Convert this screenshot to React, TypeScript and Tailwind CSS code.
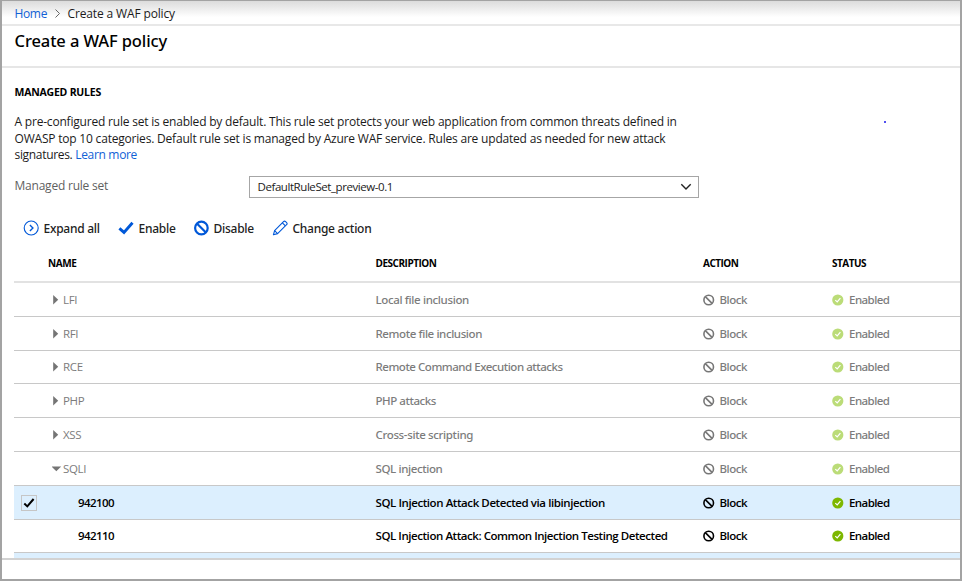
import type { ReactNode } from 'react';

const BLUE = '#0058d8';

function ExpandIcon() {
  return (
    <svg width="16" height="16" viewBox="0 0 16 16" fill="none" stroke={BLUE}>
      <circle cx="8.2" cy="8" r="7" strokeWidth="1.1" />
      <path d="M6.9 5.1 9.9 8l-3 2.9" strokeWidth="1.4" />
    </svg>
  );
}

function EnableIcon() {
  return (
    <svg width="16" height="16" viewBox="0 0 16 16" fill="none" stroke={BLUE} strokeWidth="2.9">
      <path d="M1.4 8.3 6 12.4 14.5 2.8" />
    </svg>
  );
}

function DisableIcon() {
  return (
    <svg width="16" height="16" viewBox="0 0 16 16" fill="none" stroke={BLUE} strokeWidth="2.2">
      <circle cx="8.4" cy="8" r="6.3" />
      <path d="m3.9 3.5 9 9" />
    </svg>
  );
}

function PencilIcon() {
  return (
    <svg width="16" height="16" viewBox="0 0 16 16" fill="none" stroke={BLUE} strokeWidth="1.1" strokeLinejoin="round">
      <path d="m1.4 14.8 1.2-4.2L11.5 1.6a1.5 1.5 0 0 1 2.1 0l1 1a1.5 1.5 0 0 1 0 2.1L5.6 13.6z" />
      <path d="m2.6 10.6 3 3M10.4 2.8l3 3" />
    </svg>
  );
}

function BlockIcon({ color }: { color: string }) {
  return (
    <svg width="12" height="12" viewBox="0 0 12 12" fill="none" stroke={color} strokeWidth="1.6">
      <circle cx="5.7" cy="6" r="4.8" />
      <path d="m2.3 2.6 6.8 6.8" />
    </svg>
  );
}

function EnabledIcon({ color }: { color: string }) {
  return (
    <svg width="12" height="12" viewBox="0 0 12 12" fill="none">
      <circle cx="5.8" cy="6" r="5.6" fill={color} />
      <path d="m3.3 6.1 1.9 1.8 3.2-3.8" stroke="#fff" strokeWidth="1.2" />
    </svg>
  );
}

function Tool({ icon, label, className }: { icon: ReactNode; label: string; className: string }) {
  return (
    <div className={`flex items-center gap-1 ${className}`}>
      {icon}
      <span className="pt-[2px] pl-[0.5px]">{label}</span>
    </div>
  );
}

type Row = {
  name: string;
  description: string;
  height: string;
  spacing: string;
  kind: 'closed' | 'open' | 'rule';
  checked?: boolean;
};

const rows: Row[] = [
  { name: 'LFI', description: 'Local file inclusion', height: 'h-[34px]', spacing: 'tracking-[-0.36px]', kind: 'closed' },
  { name: 'RFI', description: 'Remote file inclusion', height: 'h-[34px]', spacing: 'tracking-[-0.4px]', kind: 'closed' },
  { name: 'RCE', description: 'Remote Command Execution attacks', height: 'h-[33px]', spacing: 'tracking-[-0.47px]', kind: 'closed' },
  { name: 'PHP', description: 'PHP attacks', height: 'h-[34px]', spacing: 'tracking-[-0.44px]', kind: 'closed' },
  { name: 'XSS', description: 'Cross-site scripting', height: 'h-[34px]', spacing: 'tracking-[-0.36px]', kind: 'closed' },
  { name: 'SQLI', description: 'SQL injection', height: 'h-[34px]', spacing: 'tracking-[-0.38px]', kind: 'open' },
  { name: '942100', description: 'SQL Injection Attack Detected via libinjection', height: 'h-[34px]', spacing: 'tracking-[-0.42px]', kind: 'rule', checked: true },
  { name: '942110', description: 'SQL Injection Attack: Common Injection Testing Detected', height: 'h-[33px]', spacing: 'tracking-[-0.44px]', kind: 'rule' },
];

const columns = 'grid grid-cols-[361.5px_327.5px_129px_1fr]';

function RuleRow({ row }: { row: Row }) {
  const rule = row.kind === 'rule';
  const tone = rule
    ? "font-['Open_Sans',sans-serif] font-semibold text-black"
    : "font-['Noto_Sans',sans-serif] font-medium text-[#7c7c7c]";
  return (
    <div
      className={`${columns} shrink-0 items-center border-b border-[#c8c8c8] text-[11.5px] leading-4 whitespace-nowrap ${row.height} ${tone} ${row.checked ? 'bg-[#dceffe]' : ''}`}
    >
      <div className="flex items-center">
        <div className="flex w-[38px] pl-[7px]">
          {row.checked && (
            <div className="grid size-4 place-items-center border border-[#c6c6c6]">
              <svg width="12" height="12" viewBox="0 0 12 12" fill="none" stroke="#000" strokeWidth="2">
                <path d="m1.3 6.6 3 2.8L10.6 2" />
              </svg>
            </div>
          )}
        </div>
        {rule ? (
          <span className="pl-[26px] tracking-[-0.56px]">{row.name}</span>
        ) : (
          <>
            <svg className="mr-[1px]" width="10" height="10" viewBox="0 0 10 10" fill="#757575">
              {row.kind === 'open' ? <path d="M-.6 2.4h9.8L4.3 7.2z" /> : <path d="M1.2.1 6.2 4.8 1.2 9.6z" />}
            </svg>
            <span className="font-['Open_Sans',sans-serif] tracking-[-0.35px]">{row.name}</span>
          </>
        )}
      </div>
      <span className={row.spacing}>{row.description}</span>
      <div className="flex items-center gap-[4.5px]">
        <BlockIcon color={rule ? '#000' : '#777'} />
        <span className={rule ? 'tracking-[-0.52px]' : 'tracking-[-0.44px]'}>Block</span>
      </div>
      <div className="flex items-center gap-[5px]">
        <EnabledIcon color={rule ? '#7db700' : '#bbdc78'} />
        <span className={rule ? 'tracking-[-0.58px]' : 'tracking-[-0.53px]'}>Enabled</span>
      </div>
    </div>
  );
}

export default function App() {
  return (
    <div className="relative flex h-[581px] w-[962px] flex-col overflow-hidden border-t border-r-2 border-b-2 border-l-2 border-[#a3a3a3] bg-white font-['Open_Sans','Noto_Sans',sans-serif] text-xs text-[#1b1b1b]">
      <nav className="flex h-[25px] items-center border-b-2 border-[#e8e8e8] bg-linear-to-b from-[#dcdcdc] to-white to-70% pt-[2px] pl-[12.5px] whitespace-nowrap">
        <span className="w-[39px] tracking-[-0.35px] text-[#1161d6]">Home</span>
        <svg className="mr-[7px]" width="7" height="10" viewBox="0 0 7 10" fill="none" stroke="#666">
          <path d="m1.5 .5 4 4-4 4" />
        </svg>
        <span className="tracking-[-0.14px]">Create a WAF policy</span>
      </nav>

      <header className="h-[42px] border-b-2 border-[#e6e6e6] pt-[3px] pl-[12.5px]">
        <h1 className="font-['Noto_Sans',sans-serif] text-[16.5px] leading-6 font-medium tracking-[-0.1px] text-black">
          Create a WAF policy
        </h1>
      </header>

      <main className="flex h-[490px] flex-col overflow-hidden pl-[12px]">
        <h2 className="pt-4 pl-[0.5px] text-[10.5px] leading-4 font-bold tracking-[-0.22px] text-black">MANAGED RULES</h2>
        <p className="pt-[14px] pl-[0.5px] leading-[16.5px] tracking-[-0.2px] whitespace-nowrap">
          A pre-configured rule set is enabled by default. This rule set protects your web application from common
          threats defined in
          <br />
          OWASP top 10 categories. Default rule set is managed by Azure WAF service. Rules are updated as needed for
          new attack
          <br />
          <span className="tracking-[-0.32px]">
            signatures. <span className="text-[#1161d6]">Learn more</span>
          </span>
        </p>

        <div className="flex shrink-0 pt-[12px]">
          <span className="w-[235px] pt-[2px] pl-[0.5px] tracking-[-0.22px] text-[#5f5f5f]">Managed rule set</span>
          <div className="flex h-[22px] w-[450px] items-center justify-between border border-[#a6a6a6] pr-[6px] pl-[7.5px] text-[11.5px] tracking-[-0.43px]">
            DefaultRuleSet_preview-0.1
            <svg width="12" height="8" viewBox="0 0 12 8" fill="none" stroke="#222" strokeWidth="1.4">
              <path d="m1.3 1.3 4.7 4.7 4.7-4.7" />
            </svg>
          </div>
        </div>

        <div className="mt-[21.5px] flex h-[18px] shrink-0 items-center pl-[9px] font-['Noto_Sans',sans-serif] font-medium tracking-[-0.27px] whitespace-nowrap text-[#222]">
          <Tool icon={<ExpandIcon />} label="Expand all" className="w-[95px]" />
          <Tool icon={<EnableIcon />} label="Enable" className="w-[75px]" />
          <Tool icon={<DisableIcon />} label="Disable" className="w-[79px]" />
          <Tool icon={<PencilIcon />} label="Change action" className="" />
        </div>

        <div className={`${columns} mt-[8px] h-[38px] shrink-0 items-center border-b-2 border-[#e2e2e2] pt-[2px] text-[10px] font-bold text-black`}>
          <span className="pl-[34px] tracking-[-0.4px]">NAME</span>
          <span className="tracking-[-0.48px]">DESCRIPTION</span>
          <span className="tracking-[-0.5px]">ACTION</span>
          <span className="tracking-[-0.52px]">STATUS</span>
        </div>
        {rows.map((row) => (
          <RuleRow key={row.name} row={row} />
        ))}
        <div className="h-[20px] shrink-0 bg-[#dceffe]" />
      </main>

      <footer className="flex-1 border-t-2 border-[#d2d2d2] bg-white" />
      <div className="absolute top-[120px] left-[882px] size-[2px] bg-[#5050f0]" />
    </div>
  );
}
